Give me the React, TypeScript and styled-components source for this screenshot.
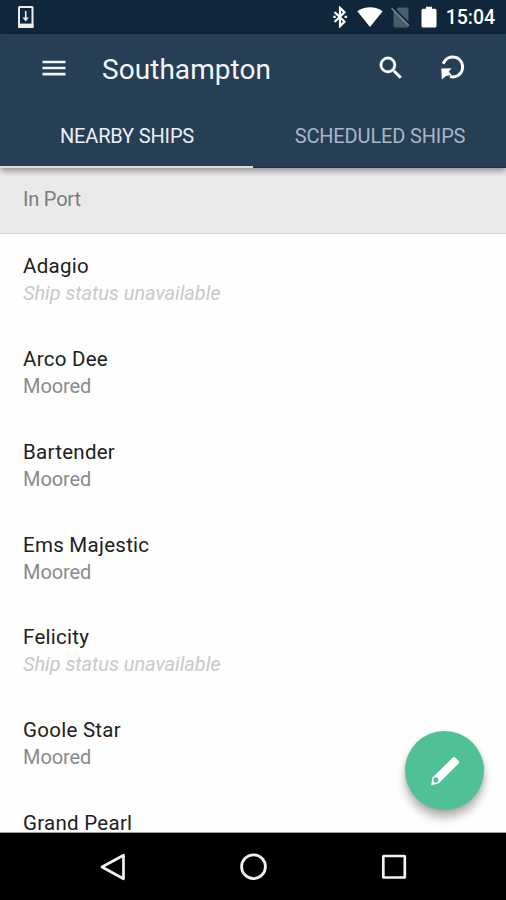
import React from "react";
import styled, { createGlobalStyle } from "styled-components";

const GlobalStyle = createGlobalStyle`
  * { box-sizing: border-box; }
  html, body { margin: 0; padding: 0; background: #000; }
  body { font-family: Roboto, "Liberation Sans", sans-serif; }
`;

const Screen = styled.div`
  position: relative;
  display: flex;
  flex-direction: column;
  width: 506px;
  height: 900px;
  overflow: hidden;
  background: #fefefe;
`;

const StatusBar = styled.header`
  flex: none;
  display: flex;
  align-items: center;
  height: 34px;
  padding: 0 11px 0 17px;
  background: #10263a;
  color: #fff;
`;

const StatusIcons = styled.div`
  display: flex;
  align-items: center;
  margin-left: auto;
`;

const Clock = styled.span`
  margin-left: 9px;
  padding-top: 2px;
  font-size: 19.5px;
  font-weight: 500;
  line-height: 34px;
  letter-spacing: -0.05px;
`;

const Glyph = styled.svg<{ $gap?: number }>`
  display: block;
  flex: none;
  margin-left: ${(p) => p.$gap ?? 0}px;
`;

const AppBar = styled.div`
  flex: none;
  position: relative;
  z-index: 1;
  height: 134px;
  background: #263f54;
  border-bottom: 1px solid #12354c;
  box-shadow: 0 3px 6px rgba(0, 0, 0, 0.38);
`;

const Toolbar = styled.div`
  display: flex;
  align-items: center;
  height: 68px;
  padding: 0 37px 0 38px;
  color: #fff;
`;

const Title = styled.h1`
  flex: 1;
  margin: 0 0 0 32px;
  padding-top: 3px;
  font-size: 28px;
  font-weight: 400;
  letter-spacing: 0.05px;
  color: #f3f6fb;
`;

const IconButton = styled.button<{ $gap?: number }>`
  display: flex;
  padding: 0;
  border: 0;
  background: none;
  color: inherit;
  margin-left: ${(p) => p.$gap ?? 0}px;
`;

const Tabs = styled.nav`
  display: grid;
  grid-template-columns: 1fr 1fr;
  height: 65px;
`;

const Tab = styled.div<{ $active?: boolean }>`
  height: ${(p) => (p.$active ? 66 : 65)}px;
  padding-left: 1px;
  text-align: center;
  font-size: 20px;
  line-height: 68px;
  letter-spacing: -0.15px;
  color: ${(p) => (p.$active ? "#eceffa" : "#a9b5c9")};
  border-bottom: ${(p) => (p.$active ? "2px solid #dcdbe4" : "0")};
`;

const SectionHeader = styled.div`
  flex: none;
  height: 66px;
  padding: 0 23px;
  background: #eaeaea;
  border-bottom: 1px solid #d8d8d8;
  font-size: 20px;
  line-height: 63px;
  letter-spacing: -0.2px;
  color: #7c7c7c;
`;

const List = styled.ul`
  flex: 1;
  min-height: 0;
  overflow: hidden;
  margin: 0;
  padding: 19px 23px 0;
  list-style: none;
  border-bottom: 1px solid #a0a0a0;
`;

const Row = styled.li`
  height: 92.85px;
`;

const ShipName = styled.div`
  padding: 2px 0 3px;
  font-size: 20.5px;
  line-height: 22px;
  letter-spacing: 0.27px;
  color: #202020;
`;

const ShipStatus = styled.div<{ $missing?: boolean }>`
  font-size: 20px;
  line-height: 27px;
  letter-spacing: -0.07px;
  font-style: ${(p) => (p.$missing ? "italic" : "normal")};
  color: ${(p) => (p.$missing ? "#c9c9c9" : "#8a8a8a")};
`;

const Fab = styled.button`
  position: absolute;
  left: 405px;
  top: 731px;
  z-index: 2;
  display: flex;
  align-items: center;
  justify-content: center;
  width: 79px;
  height: 79px;
  padding: 0;
  border: 0;
  border-radius: 50%;
  background: #50c197;
  box-shadow: 0 8px 10px rgba(0, 0, 0, 0.28), 0 1px 4px rgba(0, 0, 0, 0.12);
`;

const NavBar = styled.footer`
  flex: none;
  display: flex;
  align-items: center;
  justify-content: center;
  gap: 110px;
  height: 67px;
  background: #000;
`;

const ships: { name: string; status?: string }[] = [
  { name: "Adagio", status: "Ship status unavailable" },
  { name: "Arco Dee", status: "Moored" },
  { name: "Bartender", status: "Moored" },
  { name: "Ems Majestic", status: "Moored" },
  { name: "Felicity", status: "Ship status unavailable" },
  { name: "Goole Star", status: "Moored" },
  { name: "Grand Pearl" },
];

export default function App() {
  return (
    <>
      <GlobalStyle />
      <Screen>
        <StatusBar>
          <Glyph width="17" height="24" viewBox="0 0 17 24">
            <rect x="2" y="2" width="13.500" height="20" rx="0.500" fill="none" stroke="#efebec" strokeWidth="2" />
            <path d="M1 20.600h15.500" stroke="#efebec" strokeWidth="4" />
            <path d="M8.700 6v8" stroke="#efebec" strokeWidth="1.600" />
            <path d="M5.500 12.500h6.400L8.700 16.600z" fill="#efebec" />
          </Glyph>
          <StatusIcons>
            <Glyph width="14" height="22" viewBox="0 0 14 22">
              <path d="M1.500 6l10 9.700L7 20.200V1.800l4.500 4.500L1.500 16" fill="none" stroke="#fff" strokeWidth="2.200" />
              <path d="M0.300 9.700h2.400v2.400H0.300zM11.600 9.700H14v2.400h-2.400z" fill="#fff" />
            </Glyph>
            <Glyph $gap={10} width="26" height="22" viewBox="0 0 26 22">
              <path d="M13 21L0.300 5.200C7.500-0.200 18.500-0.200 25.700 5.200z" fill="#fff" />
            </Glyph>
            <Glyph $gap={8} width="20" height="22" viewBox="0 0 20 22">
              <path d="M7 1.500h9a1.500 1.500 0 0 1 1.500 1.500v17a1.500 1.500 0 0 1-1.500 1.500H4a1.500 1.500 0 0 1-1.500-1.500V6z" fill="#4b5c6b" />
              <path d="M1.700 1.200l17.500 17.500" stroke="#10263a" strokeWidth="2" />
              <path d="M0.500 2.200l17.500 17.500" stroke="#7d8994" strokeWidth="1.600" />
            </Glyph>
            <Glyph $gap={10} width="16" height="22" viewBox="0 0 16 22">
              <path d="M5 0.800h6v2h3a1.500 1.500 0 0 1 1.500 1.500v15.700a1.500 1.500 0 0 1-1.500 1.500H2a1.500 1.500 0 0 1-1.500-1.500V4.300A1.500 1.500 0 0 1 2 2.800h3z" fill="#fff" />
            </Glyph>
            <Clock>15:04</Clock>
          </StatusIcons>
        </StatusBar>

        <AppBar>
          <Toolbar>
            <IconButton aria-label="Menu">
              <Glyph width="32" height="32" viewBox="0 0 32 32">
                <path d="M4.500 10h23M4.500 16h23M4.500 22.200h23" stroke="#f3f4fa" strokeWidth="2.700" />
              </Glyph>
            </IconButton>
            <Title>Southampton</Title>
            <IconButton aria-label="Search">
              <Glyph width="30" height="30" viewBox="0 0 24 24">
                <path fill="#fff" stroke="#fff" strokeWidth="0.300" d="M15.500 14h-.79l-.28-.27A6.471 6.471 0 0 0 16 9.500 6.500 6.500 0 1 0 9.500 16c1.610 0 3.090-.59 4.230-1.570l.27.28v.79l5 4.990L20.490 19l-4.990-5zm-6 0C7.010 14 5 11.990 5 9.500S7.010 5 9.500 5 14 7.010 14 9.500 11.990 14 9.500 14z" />
              </Glyph>
            </IconButton>
            <IconButton aria-label="Refresh" $gap={32}>
              <Glyph width="31" height="30" viewBox="0 0 31 30">
                <path d="M5.200 10.800A10 10 0 1 1 12 23.600" fill="none" stroke="#fff" strokeWidth="2.900" />
                <path d="M3.300 15.500L13.500 15.300L10.800 18.700L14 22.300L8.500 22.800L3.800 26.500z" fill="#fff" />
              </Glyph>
            </IconButton>
          </Toolbar>
          <Tabs>
            <Tab $active>NEARBY SHIPS</Tab>
            <Tab>SCHEDULED SHIPS</Tab>
          </Tabs>
        </AppBar>

        <SectionHeader>In Port</SectionHeader>

        <List>
          {ships.map((ship) => (
            <Row key={ship.name}>
              <ShipName>{ship.name}</ShipName>
              {ship.status && (
                <ShipStatus $missing={ship.status !== "Moored"}>{ship.status}</ShipStatus>
              )}
            </Row>
          ))}
        </List>

        <NavBar>
          <Glyph width="30" height="30" viewBox="0 0 30 30">
            <path d="M4 15L25.500 3.200v23.600z" fill="none" stroke="#f2f2f2" strokeWidth="2.700" strokeLinejoin="round" />
          </Glyph>
          <Glyph width="30" height="30" viewBox="0 0 30 30">
            <circle cx="15.500" cy="14.700" r="11.900" fill="none" stroke="#f2f2f2" strokeWidth="2.800" />
          </Glyph>
          <Glyph width="30" height="30" viewBox="0 0 30 30">
            <rect x="5.300" y="4" width="21.500" height="21.500" rx="0.500" fill="none" stroke="#f2f2f2" strokeWidth="2.700" />
          </Glyph>
        </NavBar>

        <Fab aria-label="Edit">
          <Glyph width="30" height="30" viewBox="0 0 30 30">
            <path d="M1.200 29.200L2.300 21.800L22.800 1.600Q24.200 0.500 25.500 1.700L28.700 5Q29.600 6.300 28.600 7.400L8.900 27.300z" fill="#fff" />
            <ellipse cx="5.800" cy="24" rx="2.500" ry="2.800" fill="#50c197" />
          </Glyph>
        </Fab>
      </Screen>
    </>
  );
}
